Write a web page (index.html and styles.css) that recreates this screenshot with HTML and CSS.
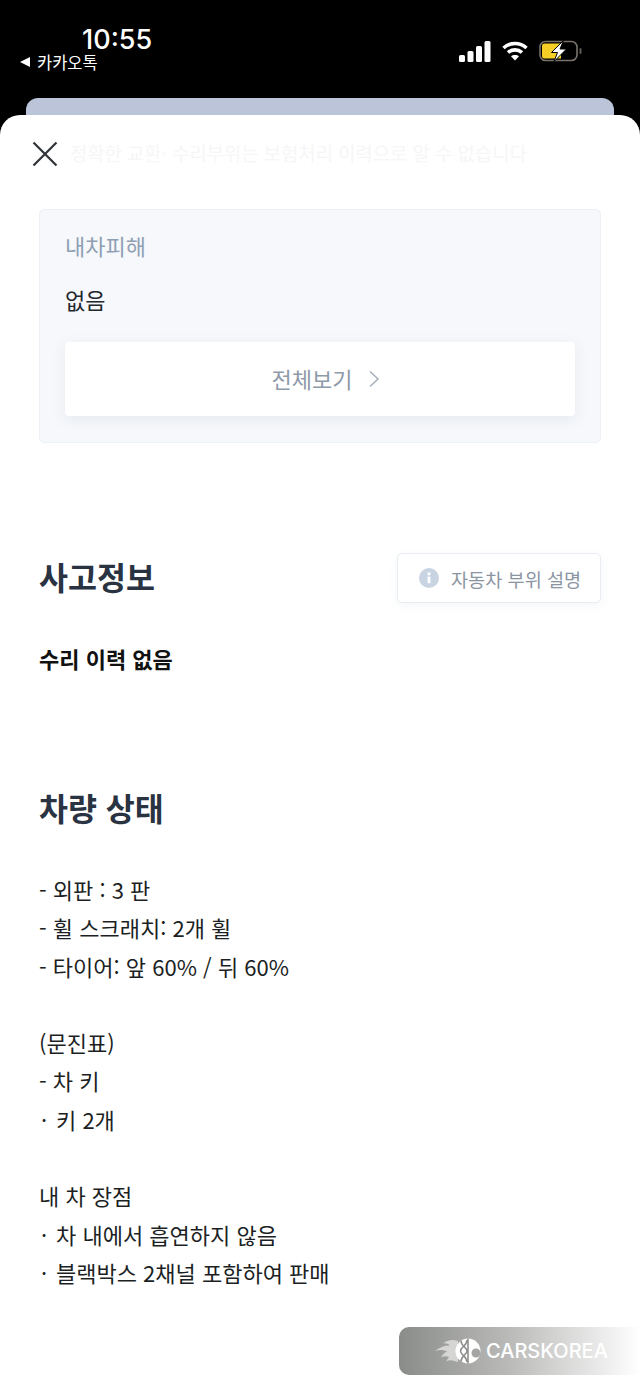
FILE: index.html
```html
<!DOCTYPE html>
<html lang="ko">

<head>
    <meta charset="UTF-8">
    <meta name="viewport" content="width=device-width, initial-scale=1.0">
    <title>차량 상세</title>
    <link rel="stylesheet" href="styles.css">
</head>

<body>

    <div class="screen">
        <!-- status bar -->
        <div class="statusBar">
            <div class="statusLeft">
                <span class="time">10:55</span>
                <span class="backApp"><span class="backArrow"></span>카카오톡</span>
            </div>
            <div class="statusRight">
                <svg class="signal" width="32" height="21" viewBox="0 0 32 21">
                    <rect x="0" y="14" width="6" height="7" rx="1.5" />
                    <rect x="8.5" y="10" width="6" height="11" rx="1.5" />
                    <rect x="17" y="5" width="6" height="16" rx="1.5" />
                    <rect x="25.5" y="0" width="6" height="21" rx="1.5" />
                </svg>
                <svg class="wifi" width="26" height="20" viewBox="0 0 26 20">
                    <path d="M1.5 7 C8 1 18 1 24.5 7" />
                    <path d="M6 11.5 C10 8 16 8 20 11.5" />
                    <path class="wifiDot" d="M13 19.5 L9 15.2 C11 13.5 15 13.5 17 15.2 Z" />
                </svg>
                <svg class="battery" width="44" height="22" viewBox="0 0 44 22">
                    <rect x="1" y="1.5" width="37" height="19" rx="5.5" fill="none" stroke="#77736a" stroke-width="1.6" />
                    <path d="M3 6 Q3 3.5 5.5 3.5 H22 V18.5 H5.5 Q3 18.5 3 16 Z" fill="#f5cf25" />
                    <rect x="40.5" y="8" width="2" height="6" rx="1" fill="#5d5a54" />
                    <path d="M24.5 0.5 L12.5 12.5 H18.5 L15 21.5 L27.5 9 H21 Z" fill="#fff" stroke="#000" stroke-width="1" />
                </svg>
            </div>
        </div>

        <!-- page behind the sheet -->
        <div class="behindPage"></div>

        <div class="sheet">
            <div class="sheetTop">
                <svg class="closeIcon" width="26" height="26" viewBox="0 0 26 26">
                    <path d="M1.5 1.5 L24.5 24.5 M24.5 1.5 L1.5 24.5" />
                </svg>
                <span class="ghostText">정확한 교환· 수리부위는 보험처리 이력으로 알 수 없습니다</span>
            </div>

            <div class="damageBox">
                <div class="damageLabel">내차피해</div>
                <div class="damageValue">없음</div>
                <div class="viewAll">
                    <span>전체보기</span>
                    <svg width="12" height="18" viewBox="0 0 12 18">
                        <path d="M2 1.5 L10 9 L2 16.5" />
                    </svg>
                </div>
            </div>

            <div class="accidentHead">
                <h2>사고정보</h2>
                <div class="partsBtn">
                    <svg width="20" height="20" viewBox="0 0 20 20">
                        <circle cx="10" cy="10" r="10" fill="#c9d4e3" />
                        <rect x="8.6" y="8.6" width="2.8" height="6.6" fill="#fff" />
                        <circle cx="10" cy="5.8" r="1.6" fill="#fff" />
                    </svg>
                    <span>자동차 부위 설명</span>
                </div>
            </div>
            <p class="repairNone">수리 이력 없음</p>

            <h2 class="stateTitle">차량 상태</h2>
            <div class="stateText">
                <p>- 외판 : 3 판</p>
                <p>- 휠 스크래치: 2개 휠</p>
                <p>- 타이어: 앞 60% / 뒤 60%</p>
                <p>&nbsp;</p>
                <p>(문진표)</p>
                <p>- 차 키</p>
                <p><span class="dot">·</span>키 2개</p>
                <p>&nbsp;</p>
                <p>내 차 장점</p>
                <p><span class="dot">·</span>차 내에서 흡연하지 않음</p>
                <p><span class="dot">·</span>블랙박스 2채널 포함하여 판매</p>
            </div>
        </div>

        <!-- watermark over the page -->
        <div class="watermark">
            <svg width="50" height="32" viewBox="0 0 50 32">
                <path class="flame" d="M24 6 C19 4 13 5 9 8.5 C12 7.5 15 9 16 10.5 C11 10 6 12 1 16 C5 14.5 10 15 13 16.5 C10 18 8 20 7 22.5 C10 20.5 13 21 15 22 C14 23.5 13 25 12 26.5 C16 24 20 26 24 27 Z" />
                <circle cx="34" cy="16" r="12.5" fill="#fff" />
                <path class="dna" d="M27 5.5 C27 12 33 12 33 16 C33 20 27 20 27 26.5 M33 5 C33 11 26.5 12 26.5 16 C26.5 20 33 21 33 27 M34 3.5 V28.5" />
                <circle cx="42" cy="18" r="4.5" fill="#a4a5a3" />
            </svg>
            <span>CARSKOREA</span>
        </div>
    </div>

</body>

</html>
```

FILE: styles.css
```css
* {
    box-sizing: border-box;
}

body {
    margin: 0;
    background-color: #000;
    font-family: "Noto Sans CJK KR", "Noto Sans", sans-serif;
}

h2,
p {
    margin: 0;
}

.screen {
    position: relative;
    width: 640px;
    height: 1393px;
    overflow: hidden;
}

.statusBar {
    height: 98px;
    display: flex;
    justify-content: space-between;
    padding: 25px 57px 0 20px;
    color: #fff;
}

.statusLeft {
    display: flex;
    flex-direction: column;
}

.time {
    margin-left: 62px;
    font-family: Inter, sans-serif;
    font-size: 27px;
    font-weight: 500;
    line-height: 30px;
}

.backApp {
    display: flex;
    align-items: center;
    gap: 7px;
    font-size: 16.5px;
    line-height: 20px;
    margin-top: -3px;
}

.backArrow {
    width: 0;
    height: 0;
    border-top: 5.5px solid transparent;
    border-bottom: 5.5px solid transparent;
    border-right: 10px solid #fff;
}

.statusRight {
    display: flex;
    align-items: center;
    gap: 11px;
    height: 52px;
}

.signal {
    fill: #fff;
}

.wifi path {
    fill: none;
    stroke: #fff;
    stroke-width: 3.6;
}

.wifi .wifiDot {
    fill: #fff;
    stroke: none;
}

.behindPage {
    height: 17px;
    margin: 0 26px;
    border-radius: 12px 12px 0 0;
    background-color: #bcc4da;
}

.sheet {
    height: 1278px;
    padding: 26px 39px 0;
    border-radius: 20px 20px 0 0;
    background-color: #fff;
}

.sheetTop {
    display: flex;
    align-items: center;
    gap: 12px;
    margin-left: -7px;
    height: 26px;
}

.closeIcon path {
    fill: none;
    stroke: #2f3338;
    stroke-width: 2.2;
}

.ghostText {
    margin-bottom: 3px;
    font-size: 18.8px;
    color: #f6f6f7;
    white-space: nowrap;
}

.damageBox {
    height: 234px;
    margin-top: 42px;
    padding: 18px 25px 0;
    background-color: #f6f8fb;
    border: 1px solid #edf0f5;
    border-radius: 5px;
}

.damageLabel {
    font-size: 22px;
    line-height: 34px;
    color: #8f9fb3;
}

.damageValue {
    margin-top: 20px;
    font-size: 22px;
    line-height: 34px;
    color: #23272e;
}

.viewAll {
    height: 74px;
    margin-top: 26px;
    display: flex;
    align-items: center;
    justify-content: center;
    gap: 16px;
    padding-left: 12px;
    background-color: #fff;
    border-radius: 4px;
    box-shadow: 0 4px 14px rgba(120, 135, 160, 0.12);
    font-size: 22px;
    color: #8e9aa8;
}

.viewAll span {
    margin-bottom: 2px;
}

.viewAll path {
    fill: none;
    stroke: #a9b2bd;
    stroke-width: 1.6;
}

.accidentHead {
    margin-top: 110px;
    display: flex;
    align-items: center;
    justify-content: space-between;
}

h2 {
    font-size: 31.5px;
    font-weight: 700;
    line-height: 50px;
    color: #2a3342;
}

.accidentHead h2 {
    margin-top: -4px;
}

.partsBtn {
    width: 204px;
    height: 50px;
    display: flex;
    align-items: center;
    gap: 12px;
    padding-left: 21px;
    border: 1px solid #e9edf3;
    border-radius: 5px;
    background-color: #fff;
    box-shadow: 0 3px 8px rgba(120, 135, 160, 0.08);
    font-size: 18.6px;
    color: #8b95a2;
}

.repairNone {
    margin-top: 38px;
    font-size: 22px;
    font-weight: 700;
    line-height: 34px;
    color: #111;
}

.stateTitle {
    margin-top: 107px;
}

.stateText {
    margin-top: 38px;
    font-size: 22px;
    line-height: 38.3px;
    color: #1c1f24;
}

.dot {
    display: inline-block;
    width: 17px;
    padding-left: 2px;
}

.watermark {
    position: absolute;
    left: 399px;
    top: 1327px;
    width: 241px;
    height: 48px;
    display: flex;
    align-items: center;
    gap: 2px;
    padding-left: 35px;
    border-radius: 10px 0 0 10px;
    background-image: linear-gradient(to right, #8a8c8a, #b9bab8 45%, #ffffff);
    font-family: Inter, sans-serif;
    font-size: 20px;
    font-weight: 500;
    color: #fff;
}

.flame {
    fill: #d5d6d4;
}

.dna {
    fill: none;
    stroke: #8f918f;
    stroke-width: 1.6;
}
```
